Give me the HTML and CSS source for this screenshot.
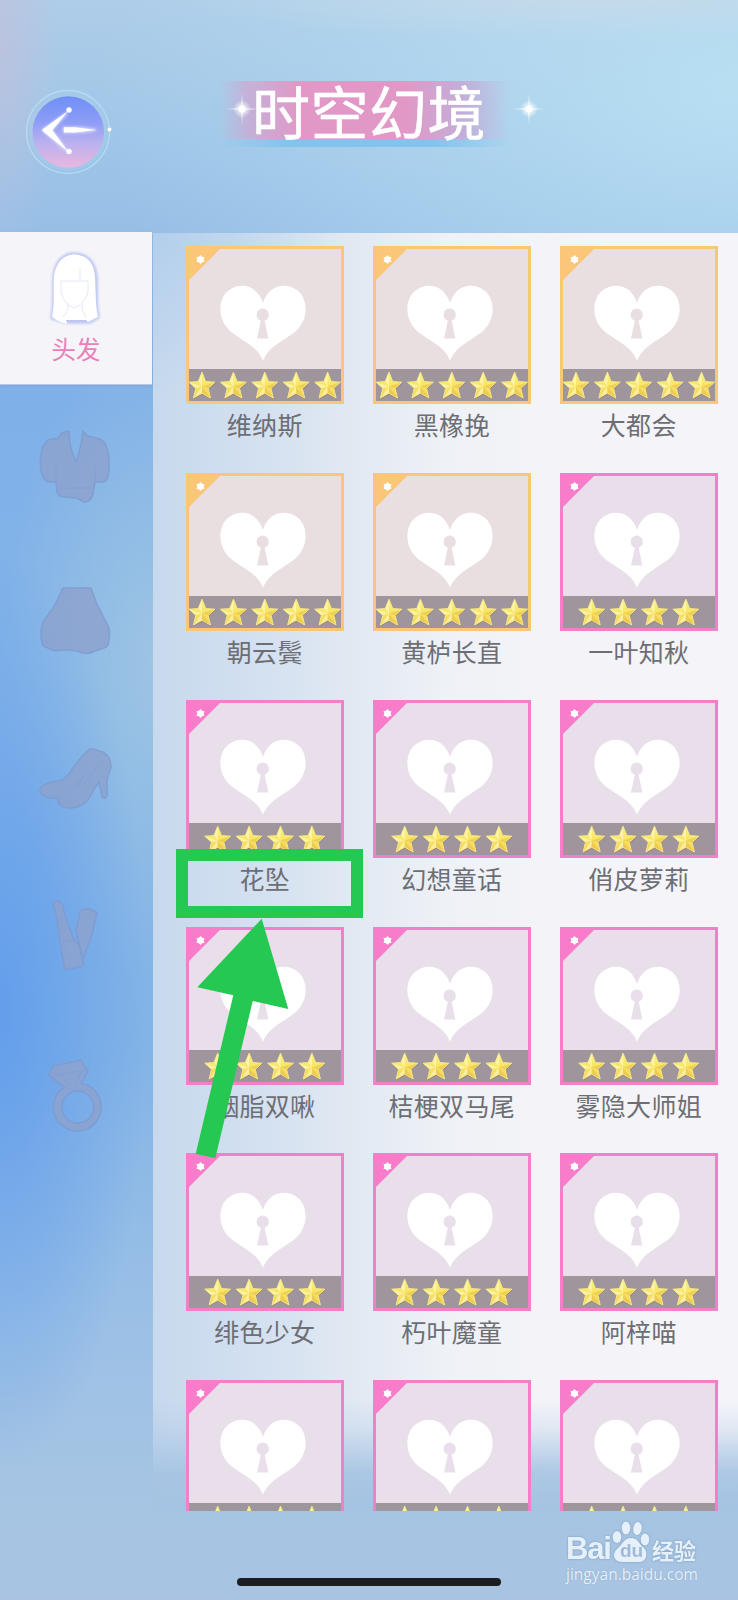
FILE: index.html
```html
<!DOCTYPE html>
<html lang="zh-CN">
<head>
    <meta charset="UTF-8">
    <meta name="viewport" content="width=device-width, initial-scale=1.0">
    <title>时空幻境</title>
    <link rel="stylesheet" href="styles.css">
</head>
<body>
    <svg class="sprite" aria-hidden="true">
        <defs>
            <linearGradient id="gold" x1="0" y1="0" x2="0" y2="1">
                <stop offset="0" stop-color="#fbf384"/>
                <stop offset="0.5" stop-color="#f8e564"/>
                <stop offset="1" stop-color="#f3d258"/>
            </linearGradient>
            <linearGradient id="orb" x1="0" y1="0" x2="0" y2="1">
                <stop offset="0" stop-color="#6f8ff5"/>
                <stop offset="0.35" stop-color="#8c9cf6"/>
                <stop offset="0.65" stop-color="#b9b1ef"/>
                <stop offset="1" stop-color="#ecb7de"/>
            </linearGradient>
            <radialGradient id="glow">
                <stop offset="0" stop-color="#fff"/>
                <stop offset="0.35" stop-color="#fff" stop-opacity="0.7"/>
                <stop offset="1" stop-color="#fff" stop-opacity="0"/>
            </radialGradient>
            <filter id="soft" x="-30%" y="-30%" width="160%" height="160%">
                <feGaussianBlur stdDeviation="1.5"/>
            </filter>
        </defs>

        <symbol id="lock" viewBox="0 0 86 76">
            <path fill="#fff" fill-rule="evenodd" d="M43 75.500C36 60 25 58 10 46C-3 34-2 14 8 6C19-3 37-1 43 18C49-1 67-3 78 6C88 14 89 34 76 46C61 58 50 60 43 75.500ZM42.700 23.500A6.300 6.300 0 0 0 40.800 35.700L37 53.500H48.400L44.600 35.700A6.300 6.300 0 0 0 42.700 23.500Z"/>
        </symbol>

        <symbol id="star" viewBox="0 0 32 32">
            <path fill="#8a7458" opacity="0.5" d="M16.500 4L20.500 13L30 13.800L23 20L25 30L16.500 25.500L8 30L10 20L3 13.800L12.500 13Z"/>
            <path fill="url(#gold)" stroke="#f6e887" stroke-width="1" stroke-linejoin="round" d="M16 3.200L19.800 12.600L29 13.200L22.200 19.300L24.500 29L16 24.200L7.500 29L9.800 19.300L3 13.200L12.200 12.600Z"/>
            <path fill="#fffbd0" opacity="0.6" d="M16 4L16 17.500L12.700 12.800ZM4 13.600L16 17.500L9.800 19ZM8.200 28L16 17.500L16 23.800Z"/>
            <path fill="#e3b23d" opacity="0.4" d="M16 17.500L28 13.600L22 19.300ZM16 17.500L23.800 28L16 23.900Z"/>
        </symbol>

        <symbol id="stars5" viewBox="0 0 157 32">
            <use href="#star" x="0" width="32" height="32"/>
            <use href="#star" x="31.400" width="32" height="32"/>
            <use href="#star" x="62.800" width="32" height="32"/>
            <use href="#star" x="94.200" width="32" height="32"/>
            <use href="#star" x="125.600" width="32" height="32"/>
        </symbol>

        <symbol id="stars4" viewBox="0 0 157 32">
            <use href="#star" x="15.700" width="32" height="32"/>
            <use href="#star" x="47.100" width="32" height="32"/>
            <use href="#star" x="78.500" width="32" height="32"/>
            <use href="#star" x="109.900" width="32" height="32"/>
        </symbol>

        <symbol id="corner" viewBox="0 0 34 34">
            <path fill="currentColor" d="M0 0H34L0 34Z"/>
            <path fill="#fff" d="M13.500 7L15.100 8.700L17.500 9.200L16.700 11.500L17.500 13.800L15.100 14.300L13.500 16L11.900 14.300L9.500 13.800L10.300 11.500L9.500 9.200L11.900 8.700Z"/>
        </symbol>

        <symbol id="sparkle" viewBox="0 0 40 40">
            <circle cx="20" cy="20" r="9" fill="url(#glow)"/>
            <path fill="#fff" opacity="0.55" d="M20 4L21.200 18.800L36 20L21.200 21.200L20 36L18.800 21.200L4 20L18.800 18.800Z"/>
            <circle cx="20" cy="20" r="3.500" fill="#fff"/>
        </symbol>
    </svg>

    <div class="screen">
        <header class="header">
            <button class="back" aria-label="返回">
                <svg viewBox="0 0 92 92">
                    <circle cx="44" cy="46" r="39" fill="#a8d0ee" opacity="0.35"/>
                    <circle cx="44" cy="46" r="41.500" fill="none" stroke="#b6dff5" stroke-width="1.400" opacity="0.85"/>
                    <circle cx="44.300" cy="46" r="35.800" fill="url(#orb)"/>
                    <g filter="url(#soft)" fill="#dfe3ff" stroke="#dfe3ff" stroke-width="2">
                        <path d="M43 27L19 44L43 65L27 44ZM40 42H55L72 44L55 46H40Z"/>
                    </g>
                    <path fill="#fff" d="M44 25L19 43Q17.500 44.300 19 45.600L44 65.500L28.500 44.300ZM40 41.300H51L72 44L51 46.600H40Z"/>
                    <circle cx="45" cy="24" r="2.700" fill="#fff"/>
                    <circle cx="45" cy="65.500" r="2.700" fill="#fff"/>
                    <circle cx="85.500" cy="43.500" r="2" fill="#fff"/>
                </svg>
            </button>
            <div class="banner">
                <svg class="sparkle"><use href="#sparkle"/></svg>
                <h1 class="title">时空幻境</h1>
                <svg class="sparkle sparkle-end"><use href="#sparkle"/></svg>
            </div>
        </header>

        <div class="content">
            <nav class="sidebar">
                <a class="tab active">
                    <svg class="tab-icon" viewBox="0 0 76 76">
                        <path fill="#b9c2f0" stroke="#b9c2f0" stroke-width="3" filter="url(#soft)" d="M14 67C17 50 15 38 16 25C18 10 26 3 36 3C48 3 56 10 58 25C59 38 57 52 60 66L52 71H28Z"/>
                        <path fill="#fff" d="M14 66C17 50 15 38 16 25C18 11 26 3.500 36 3.500C48 3.500 56 11 57 25C58 38 57 52 60 66Q56 68 50 71L48 69H28L29 73Q20 71 14 66Z"/>
                        <path fill="none" stroke="#e6e6f5" stroke-width="1" d="M23 30H50V41Q47 53 36 57Q26 53 23 41ZM42 18V29M30 52Q31 60 25 66M44 53Q43 60 48 66"/>
                    </svg>
                    <span class="tab-name">头发</span>
                </a>
                <a class="tab">
                    <svg class="tab-icon dim" viewBox="0 0 76 76">
                        <path d="M31 3L24 5L20 10L10 12L5 18Q1 31 3 41Q4 51 10 54H18L19 64Q20 69 27 69L38 70L46 74Q53 74 55 66L57 54H66Q71 52 71 40Q72 28 68 17Q65 11 58 10L49 8L45 3Q44 16 38 34Q31 20 31 3Z"/>
                        <path class="fold" d="M18 54V36M57 54V36M20 60H54"/>
                    </svg>
                </a>
                <a class="tab">
                    <svg class="tab-icon dim" viewBox="0 0 76 76">
                        <path d="M25 3H53L58 17L68 37Q73 45 71 54Q71 62 66 63L57 66Q49 71 39 66Q27 64 17 66L5 61Q1 48 5 37L17 20Z"/>
                    </svg>
                </a>
                <a class="tab">
                    <svg class="tab-icon dim" viewBox="0 0 76 76">
                        <path d="M56 7Q60 9 65 10Q73 15 73 25L69 38V54Q67 58 64 55L61 40L55 49Q48 66 32 66Q19 66 20 56Q3 57 2 48Q3 41 20 39Q27 39 35 26Q45 12 52 7Z"/>
                        <path class="fold" d="M45 34L38 43L42 42ZM63 20L48 40L26 53"/>
                    </svg>
                </a>
                <a class="tab">
                    <svg class="tab-icon dim" viewBox="0 0 76 76">
                        <path d="M38 32L42 12Q50 7 59 14L54 36L45 60Z"/>
                        <path d="M15 4Q18 0 24 4L28 19L36 41L41 45L46 67L27 71L22 44L19 20Z"/>
                        <path class="fold" d="M20 20L28 18M23 44L37 40"/>
                    </svg>
                </a>
                <a class="tab">
                    <svg class="tab-icon dim" viewBox="0 0 76 76">
                        <path fill-rule="evenodd" d="M15 10L43 4L50 15Q46 23 43 27.300A24 24 0 1 1 26 31L13 21L11 18ZM39.500 35A16 16 0 1 0 40 67A16 16 0 1 0 39.500 35Z"/>
                        <path class="fold" d="M13 20L49 14M24 19L31 29M43 16L38 28"/>
                    </svg>
                </a>
            </nav>

            <main class="panel">
                <div class="grid">
                    <div class="item gold">
                        <div class="card">
                            <svg class="corner"><use href="#corner"/></svg>
                            <svg class="lock"><use href="#lock"/></svg>
                            <div class="rating"><svg class="stars"><use href="#stars5"/></svg></div>
                        </div>
                        <p class="name">维纳斯</p>
                    </div>
                    <div class="item gold">
                        <div class="card">
                            <svg class="corner"><use href="#corner"/></svg>
                            <svg class="lock"><use href="#lock"/></svg>
                            <div class="rating"><svg class="stars"><use href="#stars5"/></svg></div>
                        </div>
                        <p class="name">黑橡挽</p>
                    </div>
                    <div class="item gold">
                        <div class="card">
                            <svg class="corner"><use href="#corner"/></svg>
                            <svg class="lock"><use href="#lock"/></svg>
                            <div class="rating"><svg class="stars"><use href="#stars5"/></svg></div>
                        </div>
                        <p class="name">大都会</p>
                    </div>

                    <div class="item gold">
                        <div class="card">
                            <svg class="corner"><use href="#corner"/></svg>
                            <svg class="lock"><use href="#lock"/></svg>
                            <div class="rating"><svg class="stars"><use href="#stars5"/></svg></div>
                        </div>
                        <p class="name">朝云鬓</p>
                    </div>
                    <div class="item gold">
                        <div class="card">
                            <svg class="corner"><use href="#corner"/></svg>
                            <svg class="lock"><use href="#lock"/></svg>
                            <div class="rating"><svg class="stars"><use href="#stars5"/></svg></div>
                        </div>
                        <p class="name">黄栌长直</p>
                    </div>
                    <div class="item">
                        <div class="card">
                            <svg class="corner"><use href="#corner"/></svg>
                            <svg class="lock"><use href="#lock"/></svg>
                            <div class="rating"><svg class="stars"><use href="#stars4"/></svg></div>
                        </div>
                        <p class="name">一叶知秋</p>
                    </div>

                    <div class="item">
                        <div class="card">
                            <svg class="corner"><use href="#corner"/></svg>
                            <svg class="lock"><use href="#lock"/></svg>
                            <div class="rating"><svg class="stars"><use href="#stars4"/></svg></div>
                        </div>
                        <p class="name">花坠</p>
                    </div>
                    <div class="item">
                        <div class="card">
                            <svg class="corner"><use href="#corner"/></svg>
                            <svg class="lock"><use href="#lock"/></svg>
                            <div class="rating"><svg class="stars"><use href="#stars4"/></svg></div>
                        </div>
                        <p class="name">幻想童话</p>
                    </div>
                    <div class="item">
                        <div class="card">
                            <svg class="corner"><use href="#corner"/></svg>
                            <svg class="lock"><use href="#lock"/></svg>
                            <div class="rating"><svg class="stars"><use href="#stars4"/></svg></div>
                        </div>
                        <p class="name">俏皮萝莉</p>
                    </div>

                    <div class="item">
                        <div class="card">
                            <svg class="corner"><use href="#corner"/></svg>
                            <svg class="lock"><use href="#lock"/></svg>
                            <div class="rating"><svg class="stars"><use href="#stars4"/></svg></div>
                        </div>
                        <p class="name">胭脂双啾</p>
                    </div>
                    <div class="item">
                        <div class="card">
                            <svg class="corner"><use href="#corner"/></svg>
                            <svg class="lock"><use href="#lock"/></svg>
                            <div class="rating"><svg class="stars"><use href="#stars4"/></svg></div>
                        </div>
                        <p class="name">桔梗双马尾</p>
                    </div>
                    <div class="item">
                        <div class="card">
                            <svg class="corner"><use href="#corner"/></svg>
                            <svg class="lock"><use href="#lock"/></svg>
                            <div class="rating"><svg class="stars"><use href="#stars4"/></svg></div>
                        </div>
                        <p class="name">雾隐大师姐</p>
                    </div>

                    <div class="item">
                        <div class="card">
                            <svg class="corner"><use href="#corner"/></svg>
                            <svg class="lock"><use href="#lock"/></svg>
                            <div class="rating"><svg class="stars"><use href="#stars4"/></svg></div>
                        </div>
                        <p class="name">绯色少女</p>
                    </div>
                    <div class="item">
                        <div class="card">
                            <svg class="corner"><use href="#corner"/></svg>
                            <svg class="lock"><use href="#lock"/></svg>
                            <div class="rating"><svg class="stars"><use href="#stars4"/></svg></div>
                        </div>
                        <p class="name">朽叶魔童</p>
                    </div>
                    <div class="item">
                        <div class="card">
                            <svg class="corner"><use href="#corner"/></svg>
                            <svg class="lock"><use href="#lock"/></svg>
                            <div class="rating"><svg class="stars"><use href="#stars4"/></svg></div>
                        </div>
                        <p class="name">阿梓喵</p>
                    </div>

                    <div class="item">
                        <div class="card">
                            <svg class="corner"><use href="#corner"/></svg>
                            <svg class="lock"><use href="#lock"/></svg>
                            <div class="rating"><svg class="stars"><use href="#stars4"/></svg></div>
                        </div>
                    </div>
                    <div class="item">
                        <div class="card">
                            <svg class="corner"><use href="#corner"/></svg>
                            <svg class="lock"><use href="#lock"/></svg>
                            <div class="rating"><svg class="stars"><use href="#stars4"/></svg></div>
                        </div>
                    </div>
                    <div class="item">
                        <div class="card">
                            <svg class="corner"><use href="#corner"/></svg>
                            <svg class="lock"><use href="#lock"/></svg>
                            <div class="rating"><svg class="stars"><use href="#stars4"/></svg></div>
                        </div>
                    </div>
                </div>
            </main>
        </div>

        <!-- highlight over the 花坠 item -->
        <div class="mark-box"></div>
        <svg class="mark-arrow" viewBox="0 0 100 244">
            <path fill="#25c851" d="M67.700 2.700L94.300 93L58.700 85L21.300 242.300L1.700 237.700L39.300 79.300L3.300 71.300Z"/>
        </svg>

        <div class="watermark">
            <div class="brand">
                <span class="brand-bai">Bai</span>
                <span class="paw">
                    <svg viewBox="0 0 38 42">
                        <g fill="#e6f0f9">
                            <ellipse cx="5" cy="16" rx="4.300" ry="6"/>
                            <ellipse cx="14" cy="7" rx="4.300" ry="6.500"/>
                            <ellipse cx="25.500" cy="7.500" rx="4.300" ry="6.500" transform="rotate(8 25.500 7.500)"/>
                            <ellipse cx="33" cy="18.500" rx="4.300" ry="6"/>
                            <path d="M19 17C26 17 27 23 31 26C36 30 36 41 27 41H10C1 41 0 32 5 28C11 23 12 17 19 17Z"/>
                        </g>
                    </svg>
                    <span class="paw-text">du</span>
                </span>
                <span class="brand-cn">经验</span>
            </div>
            <p class="site">jingyan.baidu.com</p>
        </div>

        <div class="home-bar"></div>
    </div>
</body>
</html>
```
FILE: styles.css
```css
:root {
    --gold: #fbc677;
    --gold-bg: #eadfe0;
    --pink: #f97ccb;
    --pink-bg: #e9dfea;
    --text: #6d6e74;
    --green: #25c851;
    --font-cjk: 'Noto Sans CJK SC', sans-serif;
}

* {
    margin: 0;
    padding: 0;
    box-sizing: border-box;
}

body {
    font-family: var(--font-cjk);
    color: var(--text);
    background: #a4c3e2;
}

.sprite {
    position: absolute;
    width: 0;
    height: 0;
}

.screen {
    position: relative;
    display: flex;
    flex-direction: column;
    width: 738px;
    height: 1600px;
    overflow: hidden;
    background:
        radial-gradient(ellipse 60px 220px at 0 50px, rgba(196, 190, 218, 0.65), rgba(196, 190, 218, 0)),
        radial-gradient(ellipse 420px 40px at 600px 0, rgba(200, 218, 232, 0.8), rgba(200, 218, 232, 0)),
        radial-gradient(ellipse 640px 400px at 738px 90px, rgba(186, 225, 243, 0.9), rgba(186, 225, 243, 0)),
        radial-gradient(ellipse 150px 460px at 0 1010px, rgba(98, 157, 236, 0.95), rgba(98, 157, 236, 0)),
        radial-gradient(ellipse 160px 320px at 160px 660px, rgba(160, 198, 226, 0.9), rgba(160, 198, 226, 0)),
        linear-gradient(180deg, #aecde8 0, #a0c6e8 130px, #97bfe6 230px, #7fb0e8 400px, #83b4e8 700px, #83b4e6 1050px, #9bc0e6 1320px, #a5c4e3 1480px, #a8c4e2 1600px);
}

.header {
    display: flex;
    align-items: flex-start;
    height: 232px;
    padding-top: 81px;
}

.back {
    width: 92px;
    height: 92px;
    margin: 5px 0 0 24px;
    border: none;
    background: none;
}

.back svg {
    display: block;
    width: 92px;
    height: 92px;
}

.banner {
    display: flex;
    align-items: center;
    width: 330px;
    height: 66px;
    margin-left: 104px;
    padding-bottom: 8px;
    background:
        linear-gradient(90deg, rgba(222, 152, 200, 0) 0, rgba(222, 152, 200, 0.5) 8%, #e198c6 24%, #e198c6 56%, rgba(198, 166, 212, 0.8) 74%, rgba(186, 182, 222, 0) 88%) 0 0 / 100% 58px no-repeat,
        linear-gradient(90deg, rgba(130, 195, 236, 0) 0, #84c4ec 20%, #84c4ec 65%, rgba(130, 195, 236, 0) 88%) 0 58px / 100% 8px no-repeat;
}

.sparkle {
    flex: none;
    width: 40px;
    height: 40px;
    margin: -2px -10px 0 2px;
}

.sparkle-end {
    margin-left: 23px;
}

.title {
    flex: none;
    font-size: 58px;
    font-weight: 400;
    line-height: 58px;
    letter-spacing: 0.5px;
    color: #fff;
    -webkit-text-stroke: 0.6px #fff;
}

.content {
    display: flex;
    height: 1279px;
}

.sidebar {
    display: flex;
    flex-direction: column;
    flex: none;
    width: 153px;
}

.tab {
    display: flex;
    flex-direction: column;
    align-items: center;
    width: 152px;
    height: 157px;
    padding-top: 43px;
}

.tab.active {
    height: 153px;
    padding-top: 19px;
    background: #f5f5f9;
    border-bottom: 1px solid #b9c6e4;
    box-shadow: 0 1px 2px rgba(120, 130, 190, 0.3);
}

.tab-icon {
    display: block;
    width: 76px;
    height: 76px;
    overflow: visible;
}

.tab-name {
    margin-top: 4px;
    font-size: 24.5px;
    line-height: 36px;
    color: #ea80b8;
}

.dim {
    fill: #8da3cf;
    stroke: #7f9bd0;
    stroke-width: 1.6;
    stroke-linejoin: round;
    opacity: 0.85;
}

.dim .fold {
    fill: none;
    stroke-width: 1;
    opacity: 0.7;
}

.panel {
    flex: 1;
    margin-top: 1px;
    padding: 13px 0 0 33px;
    overflow: hidden;
    background:
        linear-gradient(180deg, rgba(164, 195, 226, 0) 1165px, rgba(164, 195, 226, 0.25) 1195px, rgba(164, 195, 226, 0.9) 1240px, #a4c3e2 1278px),
        radial-gradient(ellipse 180px 160px at 0 0, rgba(165, 200, 236, 0.6), rgba(165, 200, 236, 0)),
        linear-gradient(90deg, #c7d9ed 0, #d1dff0 90px, #e0e8f2 190px, #eef1f6 290px, #f4f4f8 390px, #f5f5f9 100%);
}

.grid {
    display: grid;
    grid-template-columns: repeat(3, 157.5px);
    grid-auto-rows: 226.85px;
    column-gap: 29.5px;
}

.card {
    --tone: var(--pink);
    position: relative;
    display: flex;
    flex-direction: column;
    align-items: center;
    height: 158px;
    border: 3px solid #f47fc9;
    background: var(--pink-bg);
}

.gold .card {
    --tone: var(--gold);
    border-color: var(--gold);
    background: var(--gold-bg);
}

.corner {
    position: absolute;
    top: -1px;
    left: -2px;
    width: 34px;
    height: 34px;
    color: var(--tone);
}

.lock {
    width: 86px;
    height: 76px;
    margin: 36px 4px 0 0;
}

.rating {
    display: flex;
    justify-content: center;
    width: 100%;
    height: 32px;
    margin-top: auto;
    background: #9f959c;
}

.stars {
    flex: none;
    width: 157px;
    height: 32px;
}

.name {
    margin-top: 2px;
    font-size: 25px;
    line-height: 37px;
    letter-spacing: 0.3px;
    text-align: center;
    white-space: nowrap;
}

.mark-box {
    position: absolute;
    left: 176px;
    top: 849px;
    width: 186.5px;
    height: 69px;
    border: 12px solid var(--green);
}

.mark-arrow {
    position: absolute;
    left: 194px;
    top: 916px;
    width: 100px;
    height: 244px;
}

.watermark {
    position: absolute;
    left: 566px;
    top: 1521px;
    color: #e6f0f9;
}

.brand {
    display: flex;
    align-items: flex-end;
    height: 42px;
    filter: drop-shadow(0 0 1px rgba(90, 125, 165, 0.6));
}

.brand-bai {
    width: 46px;
    font-family: 'Liberation Sans', Arial, sans-serif;
    font-size: 31px;
    font-weight: 700;
    line-height: 28px;
    letter-spacing: -1.2px;
}

.paw {
    position: relative;
    width: 38px;
    height: 42px;
}

.paw svg {
    display: block;
    width: 38px;
    height: 42px;
}

.paw-text {
    position: absolute;
    left: 8px;
    top: 20px;
    font-family: 'Liberation Sans', Arial, sans-serif;
    font-size: 19px;
    font-weight: 700;
    line-height: 20px;
    color: #9fbbd8;
}

.brand-cn {
    margin: 0 0 2px 2px;
    font-size: 22px;
    font-weight: 700;
    line-height: 23px;
}

.site {
    font-family: 'Open Sans', 'Noto Sans', sans-serif;
    font-size: 15.5px;
    line-height: 23px;
    text-shadow: 0 0 1px rgba(90, 125, 165, 0.5);
}

.home-bar {
    position: absolute;
    left: 237px;
    top: 1578px;
    width: 264px;
    height: 8px;
    border-radius: 4px;
    background: #1c1d21;
}
```
